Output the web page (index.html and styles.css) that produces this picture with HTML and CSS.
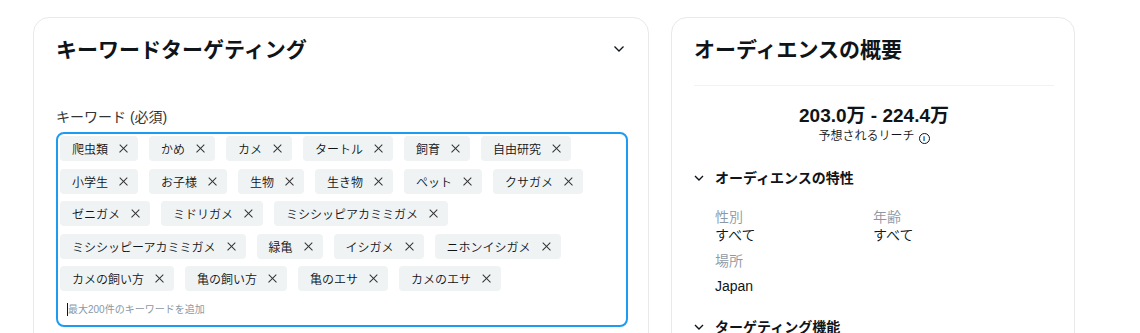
FILE: index.html
```html
<!DOCTYPE html>
<html lang="ja">
<head>
    <meta charset="UTF-8">
    <meta name="viewport" content="width=device-width, initial-scale=1.0">
    <title>キーワードターゲティング</title>
    <link rel="stylesheet" href="styles.css">
</head>
<body>
    <div class="page">
        <div class="card card-keywords">
            <div class="card-head">
                <h2>キーワードターゲティング</h2>
                <svg class="chevron" width="12" height="8" viewBox="0 0 12 8"><path d="M1.5 1.5 L6 6 L10.5 1.5" fill="none" stroke="#0f1419" stroke-width="1.3"/></svg>
            </div>

            <div class="field">
                <label class="field-label">キーワード (必須)</label>
                <div class="tag-input">
                    <div class="tags">
                        <span class="tag">爬虫類<i class="x"></i></span>
                        <span class="tag">かめ<i class="x"></i></span>
                        <span class="tag">カメ<i class="x"></i></span>
                        <span class="tag">タートル<i class="x"></i></span>
                        <span class="tag">飼育<i class="x"></i></span>
                        <span class="tag">自由研究<i class="x"></i></span>
                        <span class="tag">小学生<i class="x"></i></span>
                        <span class="tag">お子様<i class="x"></i></span>
                        <span class="tag">生物<i class="x"></i></span>
                        <span class="tag">生き物<i class="x"></i></span>
                        <span class="tag">ペット<i class="x"></i></span>
                        <span class="tag">クサガメ<i class="x"></i></span>
                        <span class="tag">ゼニガメ<i class="x"></i></span>
                        <span class="tag">ミドリガメ<i class="x"></i></span>
                        <span class="tag">ミシシッピアカミミガメ<i class="x"></i></span>
                        <span class="tag">ミシシッピーアカミミガメ<i class="x"></i></span>
                        <span class="tag">緑亀<i class="x"></i></span>
                        <span class="tag">イシガメ<i class="x"></i></span>
                        <span class="tag">ニホンイシガメ<i class="x"></i></span>
                        <span class="tag">カメの飼い方<i class="x"></i></span>
                        <span class="tag">亀の飼い方<i class="x"></i></span>
                        <span class="tag">亀のエサ<i class="x"></i></span>
                        <span class="tag">カメのエサ<i class="x"></i></span>
                    </div>
                    <div class="placeholder"><span class="caret"></span>最大200件のキーワードを追加</div>
                </div>
            </div>
        </div>

        <div class="card card-audience">
            <h2>オーディエンスの概要</h2>
            <div class="divider"></div>

            <div class="reach">
                <div class="reach-value">203.0万 - 224.4万</div>
                <div class="reach-label">予想されるリーチ<span class="info">i</span></div>
            </div>

            <div class="section">
                <div class="section-head">
                    <svg class="small-chevron" width="10" height="6" viewBox="0 0 10 6"><path d="M1 1 L5 5 L9 1" fill="none" stroke="#0f1419" stroke-width="1.4"/></svg>
                    <span>オーディエンスの特性</span>
                </div>
                <div class="traits">
                    <div class="trait">
                        <div class="trait-name">性別</div>
                        <div class="trait-value">すべて</div>
                    </div>
                    <div class="trait">
                        <div class="trait-name">年齢</div>
                        <div class="trait-value">すべて</div>
                    </div>
                    <div class="trait trait-wide">
                        <div class="trait-name">場所</div>
                        <div class="trait-value trait-list">Japan</div>
                    </div>
                </div>
            </div>

            <div class="section section-next">
                <div class="section-head">
                    <svg class="small-chevron" width="10" height="6" viewBox="0 0 10 6"><path d="M1 1 L5 5 L9 1" fill="none" stroke="#0f1419" stroke-width="1.4"/></svg>
                    <span>ターゲティング機能</span>
                </div>
            </div>
        </div>
    </div>
</body>
</html>
```

FILE: styles.css
```css
body {
    margin: 0;
    background-color: #fff;
    color: #0f1419;
    font-family: "Liberation Sans", "Noto Sans CJK JP", sans-serif;
    overflow: hidden;
}

.page {
    display: flex;
    align-items: flex-start;
    gap: 22px;
    padding: 17px 0 0 33px;
}

.card {
    background-color: #fff;
    border: 1px solid #e7e9eb;
    border-radius: 16px;
    box-sizing: border-box;
}

h2 {
    margin: 0;
    font-size: 21px;
    line-height: 24px;
    font-weight: bold;
}

/* keyword card */

.card-keywords {
    width: 616px;
    height: 400px;
    padding: 20px 20px 0 22px;
}

.card-head {
    display: flex;
    justify-content: space-between;
    align-items: center;
}

.chevron {
    margin-right: 3px;
    margin-top: -3px;
}

.field {
    margin-top: 45px;
}

.field-label {
    display: block;
    font-size: 14px;
    line-height: 20px;
    color: #333;
}

.tag-input {
    margin-top: 5px;
    border: 2px solid #1d9bf0;
    border-radius: 8px;
    padding: 2px 2px 6px 2px;
}

.tags {
    display: flex;
    flex-wrap: wrap;
    gap: 7.5px 11px;
}

.tag {
    display: inline-flex;
    align-items: center;
    height: 25px;
    padding: 0 10px 0 12px;
    background-color: #eff3f4;
    border-radius: 4px;
    font-size: 12px;
    font-weight: 350;
    color: #0f1419;
}

.x {
    position: relative;
    display: inline-block;
    width: 9px;
    height: 9px;
    margin-left: 11px;
}

.x::before,
.x::after {
    content: "";
    position: absolute;
    left: -1px;
    top: 4px;
    width: 11px;
    height: 1.3px;
    background-color: #333;
    transform: rotate(45deg);
}

.x::after {
    transform: rotate(-45deg);
}

.placeholder {
    margin-top: 10px;
    padding-left: 7px;
    font-size: 10px;
    line-height: 18px;
    color: #8b98a5;
}

.caret {
    display: inline-block;
    width: 1px;
    height: 13px;
    background-color: #0f1419;
    vertical-align: -3px;
}

/* audience card */

.card-audience {
    width: 404px;
    height: 400px;
    padding: 20px 20px 0 22px;
}

.divider {
    margin-top: 23px;
    height: 1px;
    background-color: #eff3f4;
}

.reach {
    margin-top: 19px;
    text-align: center;
}

.reach-value {
    font-size: 19px;
    line-height: 22px;
    font-weight: bold;
}

.reach-label {
    margin-top: 1px;
    font-size: 12px;
    line-height: 16px;
    font-weight: 350;
    color: #0f1419;
}

.info {
    display: inline-block;
    width: 9px;
    height: 9px;
    margin-left: 4px;
    border: 1px solid #0f1419;
    border-radius: 50%;
    font-size: 7px;
    line-height: 9px;
    text-align: center;
    font-weight: bold;
    vertical-align: -1px;
}

.section {
    margin-top: 24px;
}

.section-head {
    display: flex;
    align-items: center;
    font-size: 14px;
    line-height: 20px;
    font-weight: bold;
}

.small-chevron {
    margin: 0 11px 0 0;
}

.traits {
    display: grid;
    grid-template-columns: 158px 1fr;
    row-gap: 8px;
    margin-top: 20px;
    padding-left: 21px;
}

.trait-wide {
    grid-column: 1 / 3;
}

.trait-name {
    font-size: 14px;
    line-height: 18px;
    font-weight: 350;
    color: #8b98a5;
}

.trait-value {
    font-size: 14px;
    line-height: 18px;
    font-weight: 350;
}

.trait-list {
    margin-top: 7px;
}

.section-next {
    margin-top: 22px;
}
```
